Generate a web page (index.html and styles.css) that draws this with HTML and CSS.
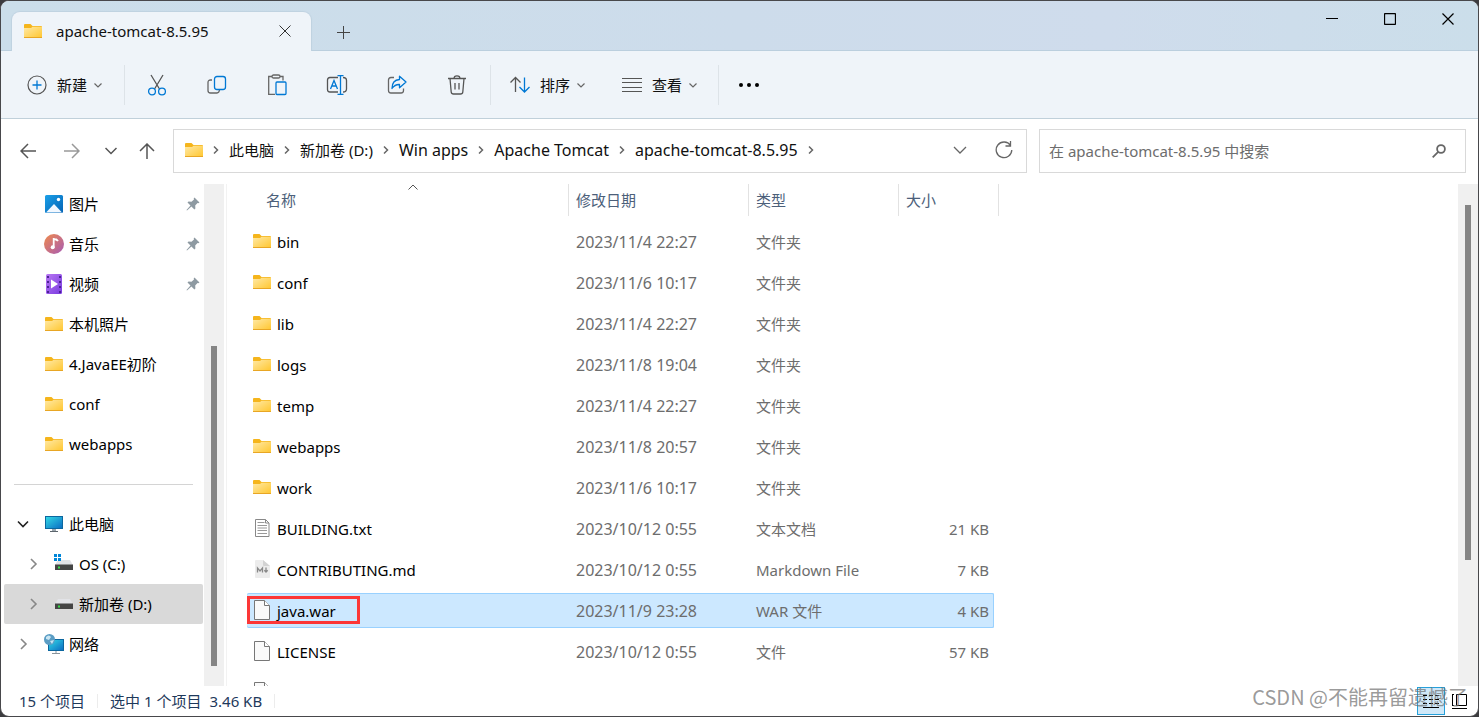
FILE: index.html
```html
<!DOCTYPE html>
<html lang="zh-CN">
<head>
<meta charset="utf-8">
<title>apache-tomcat-8.5.95</title>
<link rel="stylesheet" href="styles.css">
</head>
<body>
<svg class="defs" aria-hidden="true">
  <defs>
    <linearGradient id="g-folder" x1="0" y1="0" x2="1" y2="1"><stop offset="0" stop-color="#ffe9a6"/><stop offset="1" stop-color="#ffc62e"/></linearGradient>
    <linearGradient id="g-blue" x1="0" y1="0" x2="1" y2="1"><stop offset="0" stop-color="#1ba0e8"/><stop offset="1" stop-color="#0463b5"/></linearGradient>
    <linearGradient id="g-screen" x1="0" y1="0" x2="1" y2="1"><stop offset="0" stop-color="#34dbe6"/><stop offset="1" stop-color="#0a6bc2"/></linearGradient>
    <linearGradient id="g-music" x1="0" y1="0" x2="1" y2="1"><stop offset="0" stop-color="#f08a4b"/><stop offset="1" stop-color="#a75bb5"/></linearGradient>
    <linearGradient id="g-video" x1="0" y1="0" x2="1" y2="1"><stop offset="0" stop-color="#b877f2"/><stop offset="1" stop-color="#7a3be0"/></linearGradient>
  </defs>
  <symbol id="folder" viewBox="0 0 18 14"><path d="M0 1q0-1 1-1h5.500l2 2H17q1 0 1 1v9H0z" fill="#f5b51c"/><path d="M0 4h7l1.500-1.200H18V14H0z" fill="url(#g-folder)"/><path d="M0 13h18v1H0z" fill="#e8a624"/></symbol>
  <symbol id="down" viewBox="0 0 10 10"><path d="M1.500 3.500L5 7l3.500-3.500" fill="none" stroke="currentColor" stroke-width="1.200"/></symbol>
  <symbol id="right" viewBox="0 0 6 10"><path d="M1 1.500L4.500 5 1 8.500" fill="none" stroke="currentColor" stroke-width="1.500"/></symbol>
  <symbol id="pin" viewBox="0 0 14 14"><path d="M8.500.5l5 5-1.200.7-.8-.2-2.300 2.500.2 3-1 1-3-3L1 13.500l-.5-.5L4.500 8.500l-3-3 1-1 3 .2L8 2.400l-.3-.9z" fill="#8e9aa2"/></symbol>
  <symbol id="disk" viewBox="0 0 18 10"><path d="M3 0h12l3 5H0z" fill="#e2e3e7"/><path d="M0 4.500h18V10H0z" fill="#454545"/><path d="M3 6.500h2v2H3z" fill="#37e049"/></symbol>
  <symbol id="page" viewBox="0 0 16 20"><path d="M.5.5h10l5 5v14H.5z" fill="#fafafa" stroke="#777"/><path d="M10.500.5v5h5" fill="#fff" stroke="#777"/></symbol>
</svg>

<div class="window">
  <header class="titlebar">
    <div class="tab">
      <svg class="folder"><use href="#folder"/></svg>
      <span class="tab-name">apache-tomcat-8.5.95</span>
      <button class="tab-close" aria-label="关闭标签页"><svg width="12" height="12" viewBox="0 0 12 12"><path d="M.5.5l11 11M11.500.5l-11 11" stroke="#333"/></svg></button>
    </div>
    <button class="tab-add" aria-label="新标签页"><svg width="13" height="13" viewBox="0 0 13 13"><path d="M6.500 0v13M0 6.500h13" stroke="#444"/></svg></button>
    <div class="controls">
      <button aria-label="最小化"><svg width="12" height="12"><path d="M0 5.500h12" stroke="#000"/></svg></button>
      <button aria-label="最大化"><svg width="12" height="12"><rect x=".5" y=".5" width="11" height="11" rx="1" fill="none" stroke="#000" stroke-width="1.300"/></svg></button>
      <button aria-label="关闭"><svg width="12" height="12"><path d="M.5.5l11 11M11.500.5l-11 11" stroke="#000" stroke-width="1.200"/></svg></button>
    </div>
  </header>

  <div class="toolbar">
    <button class="command"><svg width="20" height="20" fill="none"><circle cx="10" cy="10" r="9" stroke="#555" stroke-width="1.200"/><path d="M10 5.500v9M5.500 10h9" stroke="#0078d4" stroke-width="1.300"/></svg><span>新建</span><svg class="chevron"><use href="#down"/></svg></button>
    <div class="actions">
      <button aria-label="剪切"><svg width="20" height="22" fill="none" stroke-width="1.300"><path d="M4 1l8.500 14M16 1L7.500 15" stroke="#555"/><circle cx="5" cy="17.500" r="3.400" stroke="#0078d4"/><circle cx="15" cy="17.500" r="3.400" stroke="#0078d4"/></svg></button>
      <button aria-label="复制"><svg width="20" height="20" fill="none" stroke-width="1.300"><path d="M5 5H3.500Q1 5 1 7.500v8Q1 18 3.500 18H10q2 0 2.500-3" stroke="#666"/><rect x="7.500" y="1.500" width="11" height="13" rx="2.500" stroke="#0078d4"/></svg></button>
      <button aria-label="粘贴"><svg width="20" height="22" fill="none" stroke-width="1.300"><path d="M5 2.500H1.700v17.800H8M13 2.500h3v4" stroke="#666"/><rect x="5" y="1" width="8" height="3" rx="1.500" stroke="#666"/><rect x="9" y="8" width="10" height="12.500" rx="1" stroke="#0078d4"/></svg></button>
      <button aria-label="重命名"><svg width="22" height="20" fill="none" stroke-width="1.300"><path d="M12 2.500H4Q1.500 2.500 1.500 5v9.500q0 2.500 2.500 2.500h8M17 2.500q3.500 0 3.500 3V14q0 3-3.500 3" stroke="#555"/><path d="M14.500 1v18M11.500.7h6M11.500 19.300h6M4.500 14L8 5.500l3.500 8.500M5.700 11h4.600" stroke="#0078d4"/></svg></button>
      <button aria-label="共享"><svg width="20" height="20" fill="none" stroke-width="1.300"><path d="M7 2.500H4Q1.500 2.500 1.500 5v10.500Q1.500 18 4 18h10q2.500 0 2.500-2.500v-2" stroke="#666"/><path d="M12.500 1.200L19 7l-6.500 5.800V9.500Q8 9.200 5 13.500q0-8.500 7.500-9z" stroke="#0078d4" stroke-linejoin="round"/></svg></button>
      <button aria-label="删除"><svg width="20" height="20" fill="none" stroke="#555" stroke-width="1.300"><path d="M1 3.500h18M3 3.500L4.200 17q.2 2 2.300 2h7q2.100 0 2.300-2L17 3.500M7 3.500Q7 .8 10 .8t3 2.700M8 8v6.500M12 8v6.500"/></svg></button>
    </div>
    <button class="command"><svg width="20" height="20" fill="none" stroke-width="1.300"><path d="M5.500 17V2.500M.5 7.500l5-5 5 5" stroke="#555"/><path d="M14.500 2.500V17M9.500 12l5 5 5-5" stroke="#0078d4"/></svg><span>排序</span><svg class="chevron"><use href="#down"/></svg></button>
    <button class="command view-command"><svg width="20" height="20"><path d="M0 3.500h20M0 7.500h20M0 12.500h20M0 16.500h20" stroke="#555"/></svg><span>查看</span><svg class="chevron"><use href="#down"/></svg></button>
    <button class="more" aria-label="更多"><svg width="20" height="4"><circle cx="2" cy="2" r="2"/><circle cx="10" cy="2" r="2"/><circle cx="18" cy="2" r="2"/></svg></button>
  </div>

  <div class="navigation">
    <nav class="history">
      <button class="back" aria-label="后退"><svg width="16" height="16"><path d="M16 8H1M8 1L1 8l7 7"/></svg></button>
      <button class="forward" aria-label="前进" disabled><svg width="16" height="16"><path d="M0 8h15M8 1l7 7-7 7"/></svg></button>
      <button aria-label="最近位置"><svg width="12" height="8"><path d="M.5 1L6 6.500 11.500 1"/></svg></button>
      <button aria-label="向上"><svg width="16" height="16"><path d="M8 16V1M1 8l7-7 7 7"/></svg></button>
    </nav>
    <div class="address">
      <svg class="folder"><use href="#folder"/></svg>
      <svg class="sep"><use href="#right"/></svg><button>此电脑</button>
      <svg class="sep"><use href="#right"/></svg><button>新加卷 (D:)</button>
      <svg class="sep"><use href="#right"/></svg><button class="latin">Win apps</button>
      <svg class="sep"><use href="#right"/></svg><button class="latin">Apache Tomcat</button>
      <svg class="sep"><use href="#right"/></svg><button class="latin">apache-tomcat-8.5.95</button>
      <svg class="sep"><use href="#right"/></svg>
      <div class="address-tools">
        <button aria-label="展开"><svg width="14" height="8"><path d="M1 1l6 6 6-6"/></svg></button>
        <button aria-label="刷新"><svg width="18" height="18"><path d="M15.500 4.500A7.800 7.800 0 1 0 16.800 9M15.500 0v5h-5"/></svg></button>
      </div>
    </div>
    <div class="search">
      <input type="text" aria-label="搜索" placeholder="在 apache-tomcat-8.5.95 中搜索">
      <svg width="14" height="14" viewBox="0 0 14 14" fill="none" stroke="#666" stroke-width="1.800"><circle cx="9" cy="5" r="3.900"/><path d="M6.200 7.800L.7 13.300"/></svg>
    </div>
  </div>

  <div class="content">
    <nav class="sidebar">
      <a class="place" href="#"><svg width="20" height="20" viewBox="0 0 20 20"><rect x="1" y="1" width="18" height="18" rx="1.500" fill="url(#g-blue)"/><path d="M2 18.500l8-8.500 8 8.500z" fill="#f2f8ff"/><circle cx="14.500" cy="5.500" r="1.700" fill="#fff"/></svg><span>图片</span><svg class="pin"><use href="#pin"/></svg></a>
      <a class="place" href="#"><svg width="20" height="20" viewBox="0 0 20 20"><circle cx="10" cy="10" r="10" fill="url(#g-music)"/><path d="M9.700 4v9.500M9.700 5q3 0 4.300 2" stroke="#fff" stroke-width="1.800" fill="none"/><circle cx="8.700" cy="13.300" r="2" fill="#fff"/></svg><span>音乐</span><svg class="pin"><use href="#pin"/></svg></a>
      <a class="place" href="#"><svg width="20" height="20" viewBox="0 0 20 20"><rect x="2" y="0" width="16" height="20" rx="1.500" fill="url(#g-video)"/><path d="M4 2v17M16 2v17" stroke="#4c2395" stroke-width="2" stroke-dasharray="2 3"/><path d="M7 5.500l7 4.500-7 4.500z" fill="#fff"/></svg><span>视频</span><svg class="pin"><use href="#pin"/></svg></a>
      <a class="place" href="#"><svg class="folder"><use href="#folder"/></svg><span>本机照片</span></a>
      <a class="place" href="#"><svg class="folder"><use href="#folder"/></svg><span>4.JavaEE初阶</span></a>
      <a class="place" href="#"><svg class="folder"><use href="#folder"/></svg><span>conf</span></a>
      <a class="place" href="#"><svg class="folder"><use href="#folder"/></svg><span>webapps</span></a>
      <hr>
      <a class="place node open" href="#"><svg class="twist" viewBox="0 0 12 12"><path d="M1 3.500l5 5 5-5"/></svg><svg width="20" height="18" viewBox="0 0 20 18"><rect x="1.500" y="1.500" width="17" height="12" fill="url(#g-screen)" stroke="#0c679f"/><path d="M8 14h4v2H8z" fill="#9ba5ad"/><path d="M6 16h8v1H6z" fill="#5d666d"/></svg><span>此电脑</span></a>
      <a class="place node child" href="#"><svg class="twist" viewBox="0 0 12 12"><path d="M4 1l5 5-5 5"/></svg><svg width="20" height="20" viewBox="0 0 20 20"><use href="#disk" x="1" y="6" width="18" height="10"/><path d="M0 0h3v3H0zM4 0h3v3H4zM0 4h3v3H0zM4 4h3v3H4z" fill="#0086d8"/></svg><span>OS (C:)</span></a>
      <a class="place node child current" href="#"><svg class="twist" viewBox="0 0 12 12"><path d="M4 1l5 5-5 5"/></svg><svg width="20" height="20" viewBox="0 0 20 20"><use href="#disk" x="1" y="5" width="18" height="10"/></svg><span>新加卷 (D:)</span></a>
      <a class="place node" href="#"><svg class="twist" viewBox="0 0 12 12"><path d="M4 1l5 5-5 5"/></svg><svg width="20" height="20" viewBox="0 0 20 20"><rect x="4.500" y="5.500" width="15" height="11" fill="url(#g-screen)" stroke="#0c679f"/><path d="M12 17v2M8 19.500h8" stroke="#8a949c"/><circle cx="5.500" cy="5.500" r="5.500" fill="#5b9dc4"/><path d="M2 3q3-3 5 0L5 6 2 5zM6 7l4-1-2 4z" fill="#c9e6f3"/></svg><span>网络</span></a>
    </nav>
    <div class="scrollbar side-scroll"><div class="thumb"></div></div>

    <main class="files">
      <table>
        <colgroup><col class="c-name"><col class="c-date"><col class="c-type"><col class="c-size"></colgroup>
        <thead><tr>
          <th><div class="head first">名称<svg class="sort" width="10" height="6"><path d="M.5 5.500L5 1l4.500 4.500" fill="none" stroke="#555"/></svg></div></th>
          <th><div class="head">修改日期</div></th><th><div class="head">类型</div></th><th><div class="head">大小</div></th>
        </tr></thead>
        <tbody>
          <tr><td><div class="cell name"><svg class="folder"><use href="#folder"/></svg>bin</div></td><td><div class="cell date">2023/11/4 22:27</div></td><td><div class="cell">文件夹</div></td><td><div class="cell size"></div></td></tr>
          <tr><td><div class="cell name"><svg class="folder"><use href="#folder"/></svg>conf</div></td><td><div class="cell date">2023/11/6 10:17</div></td><td><div class="cell">文件夹</div></td><td><div class="cell size"></div></td></tr>
          <tr><td><div class="cell name"><svg class="folder"><use href="#folder"/></svg>lib</div></td><td><div class="cell date">2023/11/4 22:27</div></td><td><div class="cell">文件夹</div></td><td><div class="cell size"></div></td></tr>
          <tr><td><div class="cell name"><svg class="folder"><use href="#folder"/></svg>logs</div></td><td><div class="cell date">2023/11/8 19:04</div></td><td><div class="cell">文件夹</div></td><td><div class="cell size"></div></td></tr>
          <tr><td><div class="cell name"><svg class="folder"><use href="#folder"/></svg>temp</div></td><td><div class="cell date">2023/11/4 22:27</div></td><td><div class="cell">文件夹</div></td><td><div class="cell size"></div></td></tr>
          <tr><td><div class="cell name"><svg class="folder"><use href="#folder"/></svg>webapps</div></td><td><div class="cell date">2023/11/8 20:57</div></td><td><div class="cell">文件夹</div></td><td><div class="cell size"></div></td></tr>
          <tr><td><div class="cell name"><svg class="folder"><use href="#folder"/></svg>work</div></td><td><div class="cell date">2023/11/6 10:17</div></td><td><div class="cell">文件夹</div></td><td><div class="cell size"></div></td></tr>
          <tr><td><div class="cell name"><svg class="doc" viewBox="0 0 18 20"><path d="M2.500 1.500h10l3.500 3.500v13.500H2.500z" fill="#fff" stroke="#888"/><path d="M12.500 1.500V5H16" fill="none" stroke="#888"/><path d="M4.500 4.500h7M4.500 7.500H14M4.500 10H14M4.500 12.500H14M4.500 15.500H14" stroke="#999"/></svg>BUILDING.txt</div></td><td><div class="cell date">2023/10/12 0:55</div></td><td><div class="cell">文本文档</div></td><td><div class="cell size">21 KB</div></td></tr>
          <tr><td><div class="cell name"><svg class="doc" viewBox="0 0 18 20"><path d="M3 1h7l7 6v11q0 1-1 1H3q-1 0-1-1V2q0-1 1-1z" fill="#ececec"/><path d="M10 1v5q0 1 1 1h6z" fill="#d2d2d2"/><path d="M4.500 13.500V9L7 12l2.500-3v4.500M13 8.500v4M11.300 11.300L13 13l1.700-1.700" fill="none" stroke="#888" stroke-width="1.300"/></svg>CONTRIBUTING.md</div></td><td><div class="cell date">2023/10/12 0:55</div></td><td><div class="cell">Markdown File</div></td><td><div class="cell size">7 KB</div></td></tr>
          <tr class="selected"><td><div class="cell name"><svg class="file"><use href="#page"/></svg>java.war<i class="marker"></i></div></td><td><div class="cell date">2023/11/9 23:28</div></td><td><div class="cell">WAR 文件</div></td><td><div class="cell size">4 KB</div></td></tr>
          <tr><td><div class="cell name"><svg class="file"><use href="#page"/></svg>LICENSE</div></td><td><div class="cell date">2023/10/12 0:55</div></td><td><div class="cell">文件</div></td><td><div class="cell size">57 KB</div></td></tr>
          <tr><td><div class="cell name"><svg class="file"><use href="#page"/></svg></div></td><td></td><td></td><td></td></tr>
        </tbody>
      </table>
    </main>
    <div class="scrollbar main-scroll"><div class="thumb"></div></div>
  </div>

  <footer class="status">
    <span class="stat">15 个项目</span>
    <span class="stat"><span>选中 1 个项目</span><span>3.46 KB</span></span>
    <div class="views">
      <button class="active" aria-label="详细信息"><svg width="16" height="16"><path d="M0 2.500h4M6 2.500h4M12 2.500h4M0 6.500h4M6 6.500h4M12 6.500h4M0 10.500h4M6 10.500h4M12 10.500h4M0 14.500h16" stroke="#000"/></svg></button>
      <button aria-label="大图标"><svg width="15" height="15" fill="none" stroke="#000"><path d="M4.500.5h10v11h-10zM.5.500v11M0 14.500h15M0 .5h2M0 11.500h2"/></svg></button>
    </div>
  </footer>
  <div class="watermark">CSDN @不能再留遗憾了</div>
</div>
</body>
</html>
```
FILE: styles.css
```css
* { box-sizing: border-box; }

body {
  margin: 0;
  background: #3c3c3f;
  color: #111;
  font: 15px/20px "Noto Sans", "Noto Sans CJK SC", sans-serif;
}

button, input { font: inherit; color: inherit; }
button { display: flex; align-items: center; justify-content: center; padding: 0; border: 0; background: none; }
a { color: inherit; text-decoration: none; }
svg { display: block; flex: none; }
.defs { position: absolute; width: 0; height: 0; }
.folder { width: 18px; height: 14px; }

.window {
  position: relative;
  display: flex;
  flex-direction: column;
  height: 100vh;
  overflow: hidden;
  border: 1px solid #48484b;
  border-radius: 9px;
  background: #fff;
}

/* title bar */
.titlebar {
  display: flex;
  flex: none;
  height: 50px;
  padding: 0 1px 0 11px;
  border-bottom: 1px solid #bbcfde;
  background: linear-gradient(90deg, #cbdeea, #cddceb 50%, #cfdcec 75%, #cbdeea);
}
.tab {
  display: flex;
  align-items: center;
  width: 299px;
  height: 39px;
  margin-top: 11px;
  padding: 0 16px 1px 12px;
  border-radius: 8px 8px 0 0;
  background: #eff4f9;
  box-shadow: 0 0 1px 1px #bfd2e0;
  clip-path: inset(-2px -2px 0 -2px);
}
.tab-name { flex: 1; padding-left: 14px; }
.tab-close { width: 20px; height: 20px; }
.tab-add { width: 40px; height: 20px; margin: 21px 0 0 12px; }
.controls { display: flex; margin-left: auto; }
.controls button { width: 58px; height: 36px; }

/* command bar */
.toolbar {
  display: flex;
  align-items: center;
  flex: none;
  height: 68px;
  padding-left: 26px;
  border-bottom: 1px solid #c0d0da;
  background: #eff4f9;
}
.command { gap: 10px; }
.chevron { width: 10px; height: 10px; margin-left: -4px; color: #666; }
.actions {
  display: flex;
  height: 40px;
  margin: 0 19px 0 21px;
  padding: 0 3px 0 2px;
  border: solid #dde3e8;
  border-width: 0 1px;
}
.actions button { width: 60px; }
.view-command { margin-left: 36px; }
.more { height: 40px; margin-left: 20px; padding-left: 20px; border-left: 1px solid #dde3e8; }

/* address row */
.navigation {
  display: grid;
  grid-template-columns: auto 2fr 1fr;
  column-gap: 12px;
  align-items: center;
  flex: none;
  height: 65px;
  padding: 0 12px 2px 13px;
}
.history { display: flex; gap: 8px; fill: none; stroke: #555; stroke-width: 1.5; }
.history button { width: 28px; height: 36px; }
.history .back { margin-right: 8px; }
.history .forward { margin-right: 3px; stroke: #999; }
.address, .search { display: flex; align-items: center; height: 44px; border: 1px solid #d9d9d9; }
.address { gap: 10px; min-width: 0; padding: 0 0 2px 11px; }
.address .latin { font-size: 16px; }
.sep { width: 6px; height: 10px; color: #666; }
.address-tools { display: flex; margin-left: auto; fill: none; stroke: #666; stroke-width: 1.3; }
.address-tools button { width: 44px; height: 40px; }
.search { padding: 0 19px 0 9px; }
.search input { flex: 1; min-width: 0; padding: 0; border: 0; outline: 0; background: none; }
.search input::placeholder { color: #6d6d6d; opacity: 1; }

/* body */
.content { display: flex; flex: 1; min-height: 0; }
.sidebar { width: 203px; flex: none; overflow: hidden; }
.place { display: flex; align-items: center; gap: 5px; height: 40px; margin: 0 1px 0 3px; padding: 0 3px 0 40px; color: #000; }
.place > .folder { margin: 0 1px; }
.pin { width: 14px; height: 14px; margin-left: auto; }
.sidebar hr { height: 1px; margin: 20px 11px 19px 13px; border: 0; background: #d4d4d4; }
.node { padding-left: 13px; }
.child { padding-left: 23px; }
.twist { width: 12px; height: 12px; margin-right: 10px; fill: none; stroke: #888; stroke-width: 1.6; }
.open .twist { stroke: #222; }
.current { border-radius: 2px; background: #d9d9d9; }
.scrollbar { display: flex; justify-content: center; flex: none; width: 20px; background: #f0f0f0; }
.thumb { width: 6px; background: #858585; }
.side-scroll { padding: 162px 0 20px; }
.main-scroll { padding: 21px 0 126px; }

/* file list */
.files { flex: 1; min-width: 0; overflow: hidden; margin-left: 2px; padding-left: 20px; border-left: 1px solid #f2f2f2; }
table { table-layout: fixed; width: 752px; border-collapse: collapse; }
.c-name { width: 322px; }
.c-date { width: 180px; }
.c-type { width: 150px; }
.c-size { width: 100px; }
th { padding: 0 0 5px; font-weight: 400; text-align: left; }
.head { position: relative; height: 32px; padding: 6px 0 0 7px; border-right: 1px solid #e2e2e2; color: #4c607a; }
.first { padding-left: 19px; }
.sort { position: absolute; top: 0; left: 50%; }
td { padding: 3px 0; }
.cell { display: flex; align-items: center; height: 35px; padding-left: 7px; color: #6d6d6d; white-space: nowrap; }
.date { font-size: 16px; }
.name { position: relative; gap: 6px; padding-left: 6px; color: #000; }
.name svg { margin-bottom: 2px; }
.size { justify-content: flex-end; margin-right: 5px; padding-right: 5px; }
.doc { width: 18px; height: 20px; }
.file { width: 16px; height: 20px; margin: 0 1px; }
.selected .cell { background: #cce8ff; box-shadow: inset 0 1px #99d1ff, inset 0 -1px #99d1ff; }
.selected .name { border-radius: 2px 0 0 2px; }
.selected .size { border-radius: 0 2px 2px 0; box-shadow: inset 0 1px #99d1ff, inset 0 -1px #99d1ff, inset -1px 0 #99d1ff; }
.marker { position: absolute; top: 3px; left: 0; width: 113px; height: 28px; border: 3px solid #fc3737; }

/* status bar */
.status { display: flex; align-items: center; flex: none; height: 30px; padding-left: 18px; color: #1e395b; }
.stat { display: flex; gap: 8px; margin-right: 12px; padding-right: 12px; border-right: 1px solid #ececec; line-height: 14px; }
.views { display: flex; margin-left: auto; padding-right: 5px; }
.views button { width: 28px; height: 28px; border: 1px solid transparent; }
.views .active { border-color: #26a0da; background: #cfe8f8; }
.watermark {
  position: absolute;
  right: 10px;
  bottom: 5px;
  color: rgba(110, 110, 110, 0.7);
  font: 20px/28px "Noto Sans CJK SC", sans-serif;
  pointer-events: none;
}
```
